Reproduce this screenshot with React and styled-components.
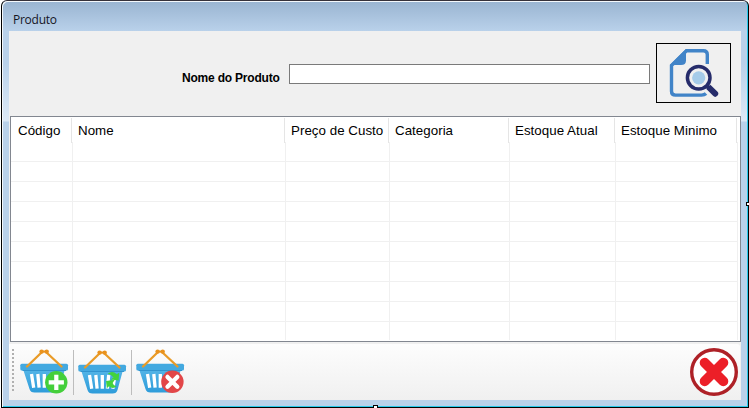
import React from 'react';
import styled, { createGlobalStyle } from 'styled-components';

const Global = createGlobalStyle`
  * { box-sizing: border-box; }
  body { margin: 0; background: #fff; overflow: hidden; }
`;

const Desktop = styled.div`
  position: relative;
  width: 749px;
  height: 408px;
  padding-left: 1px;
  background: #fff;
`;

const Window = styled.div`
  width: 748px;
  height: 408px;
  display: flex;
  flex-direction: column;
  border: 1px solid #000;
  border-top-color: #35313a;
  border-radius: 6px 6px 0 0;
  background: linear-gradient(#99b4d1 0, #b9d1ea 30px, #b9d1ea 62px, #dbe8f6 118px, #dbe8f6 120px, #b9d1ea 121px);
  box-shadow: inset 1px 1px 0 #f4f8fc, inset -1px -1px 0 #27c8ea;
  padding: 0 7px 7px;
`;

const TitleBar = styled.header`
  height: 30px;
  flex: none;
  padding: 11px 0 0 4px;
  font: 12px/16px 'Open Sans', 'Noto Sans', sans-serif;
  letter-spacing: -0.25px;
  color: #15151f;
`;

const Client = styled.main`
  flex: 1;
  display: flex;
  flex-direction: column;
  background: #f0f0f0;
  width: 732px;
`;

const SearchArea = styled.section`
  height: 85px;
  display: flex;
  padding-left: 172px;
`;

const Label = styled.label`
  width: 108px;
  margin-top: 40px;
  padding-left: 1px;
  font: bold 12px/14px 'Liberation Sans', Arial, sans-serif;
  letter-spacing: -0.2px;
  white-space: nowrap;
  color: #000;
`;

const NameInput = styled.input`
  width: 361px;
  height: 20px;
  margin-top: 33px;
  padding: 0 3px;
  border: 1px solid #7a7a7a;
  border-radius: 0;
  background: #fff;
  outline: none;
`;

const SearchButton = styled.button`
  width: 75px;
  height: 60px;
  margin: 12px 0 0 6px;
  padding: 0;
  border: 1px solid #000;
  background: #f0f0f0;
  svg { display: block; }
`;

const ListView = styled.section`
  width: 731px;
  height: 226px;
  margin-left: 1px;
  border: 1px solid #828790;
  background: #fff;
  padding-top: 1px;
`;

const HeaderRow = styled.div`
  display: grid;
  grid-template-columns: 61px 213px 104px 120px 106px 122px;
  height: 24px;
`;

const HeaderCell = styled.div`
  padding-left: ${(p) => (p.$first ? 7 : 6)}px;
  border-right: 1px solid #e5e5e5;
  font: 13.33px/25px 'Liberation Sans', Arial, sans-serif;
  letter-spacing: 0.03px;
  white-space: nowrap;
  color: #000;
`;

const Rows = styled.div`
  height: 198px;
  width: 727px;
  overflow: hidden;
`;

const Row = styled.div`
  display: grid;
  grid-template-columns: 62px 213px 104px 120px 106px 122px;
  height: 20px;
`;

const Cell = styled.div`
  border-right: 1px solid #f0f0f0;
  border-bottom: 1px solid #f0f0f0;
`;

const ToolBar = styled.nav`
  width: 731px;
  height: 56px;
  margin-top: 2px;
  padding: 5px 2px 0 3px;
  display: flex;
  background: linear-gradient(#fdfdfd, #f0f0f0);
  border-radius: 0 3px 0 0;
`;

const Grip = styled.div`
  width: 2px;
  height: 43px;
  margin: 0 6px 0 0;
  background: repeating-linear-gradient(#b0b0b0 0 2px, transparent 2px 4px);
`;

const Separator = styled.i`
  width: 1px;
  height: 45px;
  margin: 1px 4px 0;
  background: #bdbdbd;
`;

const ToolButton = styled.button`
  width: 49px;
  height: 50px;
  padding: 0;
  border: 0;
  margin-left: ${(p) => (p.$end ? 'auto' : 0)};
  margin-top: ${(p) => p.$drop || 0}px;
  background: none;
  svg { display: block; overflow: visible; }
`;

const Handle = styled.i`
  position: absolute;
  width: 5px;
  height: 4px;
  border: 1px solid #000;
  background: #fff;
  left: ${(p) => p.$x}px;
  top: ${(p) => p.$y}px;
`;

const SearchIcon = () => (
  <svg width="73" height="58" viewBox="657 44 73 58" fill="none">
    <path d="M707.3 64V54.5Q707.3 50.7 703.3 50.7H686.5L671.5 65.5V91.3Q671.5 95.1 675.5 95.1H701.5Q704.5 95.1 706 93.5" stroke="#4184c8" strokeWidth="3.4" />
    <path d="M686 49V60.5Q686 65 681 65H670Z" fill="#4184c8" />
    <path d="m709 87.5 6.2 6.2" stroke="#262c6b" strokeWidth="6" strokeLinecap="round" />
    <circle cx="698.7" cy="77.8" r="13.5" fill="#f0f0f0" />
    <path d="m707 86 3 3" stroke="#262c6b" strokeWidth="4" />
    <circle cx="698.7" cy="77.8" r="11.3" fill="#f0f0f0" stroke="#262c6b" strokeWidth="3.5" />
    <circle cx="698.7" cy="77.8" r="6.6" fill="#a5cbe9" />
  </svg>
);

const Basket = ({ children }) => (
  <svg width="49" height="50" viewBox="0 0 49 50" fill="none">
    <defs>
      <linearGradient id="basket" x2="0" y2="1">
        <stop stopColor="#54b5e7" />
        <stop offset="1" stopColor="#2e9cda" />
      </linearGradient>
    </defs>
    <path d="M3 20H45L39.5 40Q38.5 43.5 34.5 43.5H14.5Q10.5 43.5 9.5 40Z" fill="url(#basket)" />
    <path d="m11.5 25 2.2 13.7M17.8 25l1.3 13.7M24.3 25v13.7M30.7 25l-1.3 13.7M37 25l-2.2 13.7" stroke="#fff" strokeWidth="3.3" />
    <rect x="0.3" y="14.8" width="47.7" height="6.6" rx="1.5" fill="#43a9e0" />
    <path d="M2.5 21.5H46" stroke="#3094cf" />
    <path d="M7 17.5 21.5 3.5M41.5 17.5 26.5 3.5" stroke="#e99b27" strokeWidth="2.3" strokeLinecap="round" />
    <path d="M21.5 2.6H26.7" stroke="#e5901b" strokeWidth="2" />
    <circle cx="21.6" cy="2.6" r="2.2" fill="#e9921d" />
    <circle cx="26.7" cy="2.6" r="2.2" fill="#e9921d" />
    {children}
  </svg>
);

const AddBadge = () => (
  <g>
    <circle cx="36.3" cy="33.3" r="11.2" fill="#44cf3b" />
    <path d="M36.3 25.7v15.2M28.7 33.3h15.2" stroke="#fff" strokeWidth="4.2" />
  </g>
);

const RefreshBadge = () => (
  <g fill="#43d33c">
    <path d="M29.8 23.6Q34.5 20.3 38.8 24.2L41.2 22.8L40.6 30.6L33 29.4L35.3 27.3Q33.3 24.5 29.8 23.6Z" />
    <path d="M28 31L36.8 29.8L34.6 33Q35.5 36 38.6 36.6Q34.5 39.5 31 36.2L28.8 38.3Z" />
  </g>
);

const RemoveBadge = () => (
  <g>
    <circle cx="36.4" cy="32.8" r="11.2" fill="#e24648" />
    <path d="m31.5 27.9 9.8 9.8m0-9.8L31.5 37.7" stroke="#fff" strokeWidth="4.3" strokeLinecap="round" />
  </g>
);

const CloseIcon = () => (
  <svg width="49" height="50" viewBox="0 0 49 50" fill="none">
    <circle cx="25" cy="23" r="22.3" fill="#fff" stroke="#ae2127" strokeWidth="3.4" />
    <path d="m15.7 13.8 18.6 18.4m0-18.4L15.7 32.2" stroke="#ec1f28" strokeWidth="10" strokeLinecap="round" />
  </svg>
);

const headers = ['Código', 'Nome', 'Preço de Custo', 'Categoria', 'Estoque Atual', 'Estoque Minimo'];

export default function App() {
  return (
    <Desktop>
      <Global />
      <Window>
        <TitleBar>Produto</TitleBar>
        <Client>
          <SearchArea>
            <Label htmlFor="nome">Nome do Produto</Label>
            <NameInput id="nome" />
            <SearchButton aria-label="Pesquisar"><SearchIcon /></SearchButton>
          </SearchArea>
          <ListView>
            <HeaderRow>
              {headers.map((name, i) => (
                <HeaderCell key={name} $first={i === 0}>{name}</HeaderCell>
              ))}
            </HeaderRow>
            <Rows>
              {Array.from({ length: 10 }, (_, r) => (
                <Row key={r}>{headers.map((name) => <Cell key={name} />)}</Row>
              ))}
            </Rows>
          </ListView>
          <ToolBar>
            <Grip />
            <ToolButton aria-label="Adicionar"><Basket><AddBadge /></Basket></ToolButton>
            <Separator />
            <ToolButton aria-label="Atualizar" $drop={1}><Basket><RefreshBadge /></Basket></ToolButton>
            <Separator />
            <ToolButton aria-label="Excluir"><Basket><RemoveBadge /></Basket></ToolButton>
            <ToolButton aria-label="Fechar" $end><CloseIcon /></ToolButton>
          </ToolBar>
        </Client>
      </Window>
      <Handle $x={373} $y={405} />
      <Handle $x={746} $y={202} />
    </Desktop>
  );
}
